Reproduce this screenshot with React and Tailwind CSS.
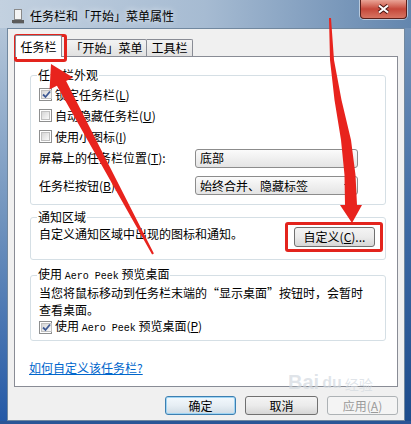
import React from 'react';

function Check({ checked }) {
  return (
    <span className="w-[13px] h-[13px] shrink-0 border border-[#8e8f8f] bg-white p-[1px] flex">
      <span className="flex-1 bg-gradient-to-br from-[#d6d6d6] to-[#fafafa] border border-[#c0c0c0] flex items-center justify-center">
        {checked && (
          <svg width="9" height="9" viewBox="0 0 9 9">
            <path d="M1 4.5 L3.5 7 L8 1.5" fill="none" stroke="#3f5a94" strokeWidth="1.8" />
          </svg>
        )}
      </span>
    </span>
  );
}

function Select({ children }) {
  return (
    <div className="w-[163px] h-[19px] rounded-[3px] border border-[#8c8c8c] bg-gradient-to-b from-[#fbfbfb] to-[#e4e4e4] flex items-center pl-[4px] pr-[6px]">
      <span className="flex-1">{children}</span>
      <svg width="7" height="4" viewBox="0 0 7 4">
        <path d="M0 0 H7 L3.5 4 Z" fill="#000" />
      </svg>
    </div>
  );
}

function Group({ title, className = '', children }) {
  return (
    <fieldset className={`border border-[#d5dfe5] rounded-[3px] ${className}`}>
      <legend className="ml-[6px] px-[1px] leading-[12px]">{title}</legend>
      {children}
    </fieldset>
  );
}

export default function App() {
  return (
    <div className="relative w-[411px] h-[424px] overflow-hidden bg-gradient-to-r from-[#c3d1e0] via-[#a6bbd2] to-[#6386ae] font-['Noto_Sans_CJK_SC','Liberation_Sans',sans-serif] text-[12px] leading-[12px] text-black">
      {/* title bar */}
      <div className="h-[28px] flex items-start">
        <svg className="ml-[12px] mt-[9px]" width="12" height="15" viewBox="0 0 12 15">
          <rect x="2.5" y="0.5" width="7" height="10" fill="#f4f4f4" stroke="#8a8a8a" />
          <rect x="0" y="11" width="12" height="3" fill="#5b5b5b" />
          <rect x="1" y="14" width="11" height="1" fill="#9aa6b2" />
        </svg>
        <span className="ml-[6px] mt-[10px] [text-shadow:0_0_6px_rgba(255,255,255,0.9)]">任务栏和「开始」菜单属性</span>
        <div className="ml-auto mr-[4px] w-[47px] h-[19px] rounded-b-[4px] border border-t-0 border-[#5a1f1a] bg-gradient-to-b from-[#e9a497] via-[#c5473a] to-[#d77462] shadow-[0_0_0_1px_rgba(255,255,255,0.5)] flex items-center justify-center">
          <svg width="13" height="10" viewBox="0 0 13 10">
            <path d="M2 1.5 L11 8.5 M11 1.5 L2 8.5" stroke="#4a1512" strokeWidth="4" />
            <path d="M2 1.5 L11 8.5 M11 1.5 L2 8.5" stroke="#fff" strokeWidth="2.2" />
          </svg>
        </div>
      </div>

      <div className="flex h-[393px]">
        <div className="w-[7px] bg-gradient-to-b from-[#b3c5d8] via-[#6e92bd] to-[#2459a6]" />
        <div className="w-[398px] bg-[#f0f0f0] border border-[#71889f] px-[6px] pt-[6px]">
          {/* tabs */}
          <div className="h-[21px] flex items-end pl-[1px]">
            <div className="relative z-10 w-[47px] h-[22px] -mb-[1px] bg-white border border-b-0 border-[#898c95] rounded-t-[2px] flex items-center justify-center">
              任务栏
            </div>
            <div className="ml-[4px] w-[81px] h-[17px] border border-b-0 border-[#898c95] rounded-t-[2px] bg-gradient-to-b from-[#f3f3f3] to-[#e1e1e1] flex items-center justify-center">
              「开始」菜单
            </div>
            <div className="w-[46px] h-[17px] border border-b-0 border-l-0 border-[#898c95] rounded-tr-[2px] bg-gradient-to-b from-[#f3f3f3] to-[#e1e1e1] flex items-center justify-center">
              工具栏
            </div>
          </div>

          {/* panel */}
          <div className="h-[331px] border border-[#898c95] bg-white pl-[15px] pr-[11px] pt-[12px]">
            <Group title="任务栏外观">
              <div className="pl-[8px] pt-[3px] pb-[8px]">
                <div className="h-[21px] flex items-center gap-[3px]">
                  <Check checked />
                  <span>锁定任务栏(<u>L</u>)</span>
                </div>
                <div className="h-[21px] flex items-center gap-[3px]">
                  <Check />
                  <span>自动隐藏任务栏(<u>U</u>)</span>
                </div>
                <div className="h-[21px] flex items-center gap-[3px]">
                  <Check />
                  <span>使用小图标(<u>I</u>)</span>
                </div>
                <div className="h-[22px] flex items-center">
                  <span className="w-[156px]">屏幕上的任务栏位置(<u>T</u>):</span>
                  <Select>底部</Select>
                </div>
                <div className="mt-[6px] h-[21px] flex items-center">
                  <span className="w-[156px]">任务栏按钮(<u>B</u>):</span>
                  <Select>始终合并、隐藏标签</Select>
                </div>
              </div>
            </Group>

            <Group title="通知区域" className="mt-[6px]">
              <div className="pl-[8px] pr-[10px] pt-[2px] pb-[12px] flex justify-between items-start">
                <span className="mt-[3px]">自定义通知区域中出现的图标和通知。</span>
                <div className="mt-[2px] w-[81px] h-[20px] rounded-[3px] border border-[#707070] bg-gradient-to-b from-[#f4f4f4] via-[#ebebeb] to-[#d6d6d6] flex items-center justify-center">
                  自定义(<u>C</u>)...
                </div>
              </div>
            </Group>

            <Group
              title={
                <span>
                  使用 <span className="font-['Liberation_Mono',monospace] text-[10px]">Aero Peek</span> 预览桌面
                </span>
              }
              className="mt-[8px]"
            >
              <div className="pl-[8px] pt-[1px] pb-[4px]">
                <p className="leading-[17px] whitespace-nowrap">
                  当您将鼠标移动到任务栏末端的“显示桌面”按钮时，会暂时
                  <br />
                  查看桌面。
                </p>
                <div className="h-[18px] flex items-center gap-[3px]">
                  <Check checked />
                  <span>
                    使用 <span className="font-['Liberation_Mono',monospace] text-[10px]">Aero Peek</span> 预览桌面(<u>P</u>)
                  </span>
                </div>
              </div>
            </Group>

            <a className="block mt-[21px] -ml-[1px] w-fit text-[#0066cc] underline">如何自定义该任务栏?</a>
          </div>

          {/* buttons */}
          <div className="mt-[9px] flex justify-end gap-[9px]">
            <div className="w-[71px] h-[19px] rounded-[3px] border border-[#3c7fb1] bg-gradient-to-b from-[#f3f9fd] via-[#e6eef4] to-[#cfdbe4] shadow-[inset_0_0_0_1px_#9fd4f3] flex items-center justify-center">
              确定
            </div>
            <div className="w-[73px] h-[19px] rounded-[3px] border border-[#707070] bg-gradient-to-b from-[#f4f4f4] via-[#ebebeb] to-[#d6d6d6] flex items-center justify-center">
              取消
            </div>
            <div className="w-[71px] h-[19px] rounded-[3px] border border-[#adb2b5] bg-[#f4f4f4] text-[#9a9a9a] flex items-center justify-center">
              应用(<u>A</u>)
            </div>
          </div>
        </div>
        <div className="w-[6px] bg-gradient-to-b from-[#7393b8] via-[#3d6aa4] to-[#1d4c8c]" />
      </div>
      <div className="h-[3px] bg-[#2a5596]" />

      {/* annotations */}
      <div className="absolute inset-0 pointer-events-none">
        <div className="absolute left-[14px] top-[34px] w-[53px] h-[28px] border-[3px] border-[#e3241d] rounded-[3px]" />
        <div className="absolute left-[285px] top-[222px] w-[98px] h-[30px] border-[3px] border-[#e3241d] rounded-[3px]" />
        <div className="absolute left-[288px] top-[372px] flex items-end gap-[3px] text-[#d2d9df]/70">
          <span className="font-['Liberation_Sans',sans-serif] font-bold text-[20px] leading-[20px]">Bai</span>
          <span className="font-['Liberation_Sans',sans-serif] font-bold text-[16px] leading-[18px]">du</span>
          <span className="text-[14px] leading-[16px]">经验</span>
        </div>
        <svg className="absolute left-0 top-0" width="411" height="424" viewBox="0 0 411 424">
          <polygon
            fill="#e8231d"
            points="51,64 73,77.4 66.1,81 153.9,253.5 152.1,254.5 56.9,85.7 49.6,89.6"
          />
          <polygon
            fill="#e8231d"
            points="329,18 330,60 334.5,100 341,140 344.5,175 345,205 340,205 352,223 362,205 357,205 355.5,175 351,140 341.5,100 334,60 331,18"
          />
        </svg>
      </div>
    </div>
  );
}
